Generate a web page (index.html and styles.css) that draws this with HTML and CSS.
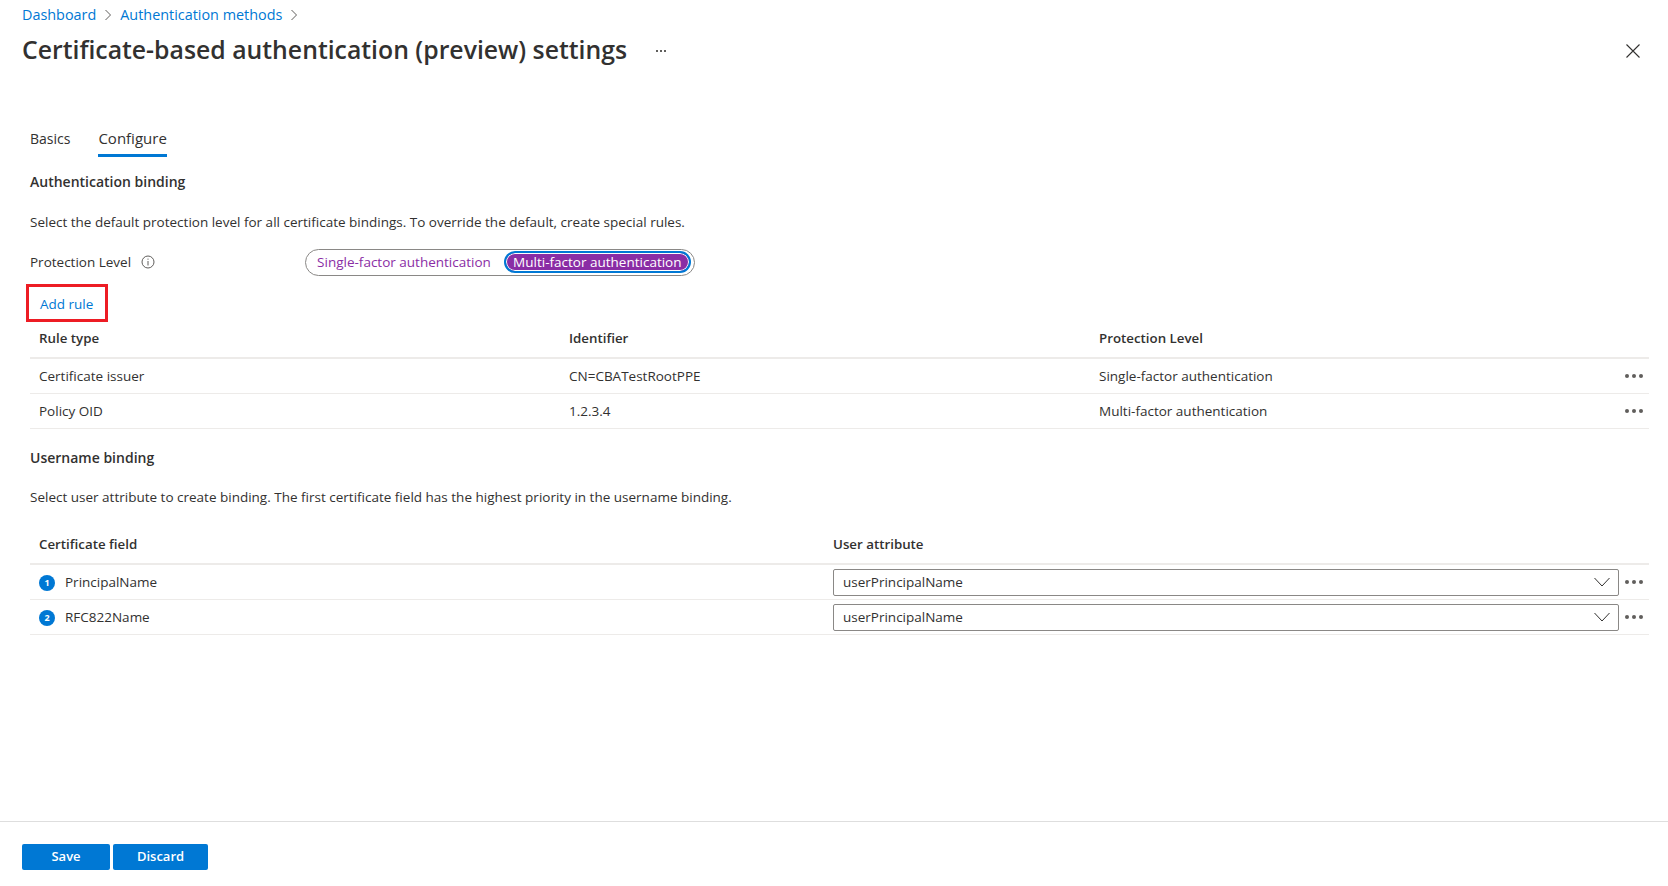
FILE: index.html
```html
<!DOCTYPE html>
<html lang="en">
<head>
  <meta charset="UTF-8">
  <meta name="viewport" content="width=device-width, initial-scale=1.0">
  <title>Certificate-based authentication (preview) settings</title>
  <link rel="stylesheet" href="styles.css">
</head>
<body>
  <div class="page">
    <header class="top">
      <nav class="crumbs">
        <a href="#">Dashboard</a>
        <svg class="crumb-sep" viewBox="0 0 8 12"><path d="M1.5 1l5 5-5 5"/></svg>
        <a href="#">Authentication methods</a>
        <svg class="crumb-sep" viewBox="0 0 8 12"><path d="M1.5 1l5 5-5 5"/></svg>
      </nav>
      <div class="title-row">
        <h1>Certificate-based authentication (preview) settings</h1>
        <span class="title-more">
          <i></i><i></i><i></i>
        </span>
        <svg class="close" viewBox="0 0 14 14"><path d="M.5.5l13 13M13.5.5l-13 13"/></svg>
      </div>
    </header>

    <main class="content">
      <div class="tabs">
        <a href="#" class="tab">Basics</a>
        <a href="#" class="tab active">Configure</a>
      </div>

      <h2 class="first">Authentication binding</h2>
      <p class="desc">Select the default protection level for all certificate bindings. To override the default, create special rules.</p>

      <div class="level-row">
        <span class="level-label">Protection Level</span>
        <svg class="info" viewBox="0 0 14 14">
          <circle cx="7" cy="7" r="6"/>
          <path d="M7 6v4.5M7 3.6v1.1"/>
        </svg>
        <div class="toggle">
          <span class="opt">Single-factor authentication</span>
          <span class="opt on">Multi-factor authentication</span>
        </div>
      </div>

      <div class="add-row">
        <a href="#" class="add-rule">Add rule</a>
      </div>

      <div class="grid rules head">
        <div>Rule type</div>
        <div>Identifier</div>
        <div>Protection Level</div>
        <div></div>
      </div>
      <div class="grid rules">
        <div>Certificate issuer</div>
        <div>CN=CBATestRootPPE</div>
        <div>Single-factor authentication</div>
        <div class="dots"><i></i><i></i><i></i></div>
      </div>
      <div class="grid rules">
        <div>Policy OID</div>
        <div>1.2.3.4</div>
        <div>Multi-factor authentication</div>
        <div class="dots"><i></i><i></i><i></i></div>
      </div>

      <h2 class="second">Username binding</h2>
      <p class="desc desc-user">Select user attribute to create binding. The first certificate field has the highest priority in the username binding.</p>

      <div class="grid fields head">
        <div>Certificate field</div>
        <div class="attr-head">User attribute</div>
        <div></div>
      </div>
      <div class="grid fields">
        <div class="field-name"><span class="badge">1</span>PrincipalName</div>
        <div class="select">
          <span>userPrincipalName</span>
          <svg viewBox="0 0 16 10"><path d="M.5 1l7.5 8 7.5-8"/></svg>
        </div>
        <div class="dots"><i></i><i></i><i></i></div>
      </div>
      <div class="grid fields">
        <div class="field-name"><span class="badge">2</span>RFC822Name</div>
        <div class="select">
          <span>userPrincipalName</span>
          <svg viewBox="0 0 16 10"><path d="M.5 1l7.5 8 7.5-8"/></svg>
        </div>
        <div class="dots"><i></i><i></i><i></i></div>
      </div>
    </main>

    <footer class="actions">
      <button type="button" class="save">Save</button>
      <button type="button" class="discard">Discard</button>
    </footer>
  </div>
</body>
</html>
```

FILE: styles.css
```css
* {
  box-sizing: border-box;
}
body {
  margin: 0;
  font-family: "Open Sans", "Noto Sans", sans-serif;
  font-size: 13.5px;
  color: #323130;
  background: #fff;
}
a {
  color: #0078d4;
  text-decoration: none;
}
.page {
  display: flex;
  flex-direction: column;
  height: 886px;
}

/* header */
.top {
  height: 122px;
  padding: 0 22px;
  flex: none;
}
.crumbs {
  height: 29px;
  display: flex;
  align-items: center;
  font-size: 14.4px;
}
.crumb-sep {
  width: 8px;
  height: 12px;
  margin: 0 8px 0 8px;
  fill: none;
  stroke: #605e5c;
  stroke-width: 1;
}
.title-row {
  display: flex;
  align-items: center;
  height: 41px;
}
h1 {
  margin: 0 0 2px;
  font-size: 24.8px;
  font-weight: 600;
  color: #323130;
}
.title-more {
  display: flex;
  gap: 2px;
  margin-left: 29px;
  padding-top: 2px;
}
.title-more i {
  width: 2px;
  height: 2px;
  background: #605e5c;
}
.close {
  width: 14px;
  height: 14px;
  margin-left: auto;
  margin-right: 6px;
  margin-top: 2px;
  fill: none;
  stroke: #323130;
  stroke-width: 1.1;
}

/* main */
.content {
  flex: 1;
  padding: 0 19px 0 30px;
}
.tabs {
  display: flex;
  gap: 28px;
  height: 35px;
}
.tab {
  color: #323130;
  font-size: 14px;
  height: 35px;
  padding-top: 7px;
}
.tab.active {
  font-size: 15px;
  padding-top: 6px;
  border-bottom: 3px solid #0078d4;
}
h2 {
  margin: 0;
  font-size: 14px;
  font-weight: 600;
  height: 18px;
  line-height: 18px;
  color: #323130;
}
h2.first {
  margin-top: 16px;
}
h2.second {
  margin-top: 20px;
}
.desc {
  margin: 22px 0 0;
  height: 18px;
  line-height: 18px;
}
.desc-user {
  margin-top: 21px;
}
.level-row {
  display: flex;
  align-items: center;
  height: 28px;
  margin-top: 17px;
}
.info {
  width: 14px;
  height: 14px;
  margin-left: 10px;
  fill: none;
  stroke: #605e5c;
  stroke-width: 1;
}
.toggle {
  display: flex;
  align-items: center;
  justify-content: space-between;
  width: 390px;
  height: 27px;
  margin-left: 150px;
  padding: 0 3px 0 11px;
  border: 1px solid #8a8886;
  border-radius: 14px;
}
.opt {
  color: #8a2da5;
}
.opt.on {
  width: 187px;
  height: 22px;
  padding: 0 7px;
  line-height: 18px;
  color: #fff;
  background: #8a2da5;
  border: 2px solid #0078d4;
  border-radius: 11px;
  box-shadow: 0 0 0 1px #fff inset;
  white-space: nowrap;
}
.add-row {
  height: 38px;
  margin-top: 8px;
  margin-left: -4px;
}
.add-rule {
  display: inline-block;
  width: 82px;
  height: 38px;
  line-height: 34px;
  padding-left: 11px;
  border: 3px solid #ed1c24;
}

/* tables */
.grid {
  display: grid;
  align-items: center;
  height: 35px;
  border-bottom: 1px solid #edebe9;
  padding-left: 9px;
}
.grid.head {
  height: 37px;
  padding-bottom: 3px;
  font-size: 13.3px;
  font-weight: 600;
  border-bottom-width: 2px;
}
.rules {
  grid-template-columns: 530px 530px 1fr 30px;
}
.fields {
  grid-template-columns: 794px 786px 1fr;
}
.grid.fields.head {
  height: 44px;
  margin-top: 15px;
  padding-top: 4px;
  padding-bottom: 0;
}
.dots {
  display: flex;
  gap: 3px;
  justify-content: flex-end;
  padding-right: 6px;
}
.dots i {
  width: 4px;
  height: 4px;
  border-radius: 50%;
  background: #605e5c;
}
.field-name {
  display: flex;
  align-items: center;
}
.badge {
  width: 16px;
  height: 16px;
  margin: 1px 10px 0 0;
  border-radius: 50%;
  background: #0078d4;
  color: #fff;
  font-size: 9px;
  font-weight: 700;
  line-height: 16px;
  text-align: center;
}
.select {
  display: flex;
  align-items: center;
  justify-content: space-between;
  height: 27px;
  padding: 0 8px 0 9px;
  border: 1px solid #8a8886;
  border-radius: 2px;
}
.select svg {
  width: 16px;
  height: 10px;
  fill: none;
  stroke: #323130;
  stroke-width: 1;
}

/* footer */
.actions {
  flex: none;
  height: 65px;
  border-top: 1px solid #dedede;
  padding: 22px 0 0 22px;
  display: flex;
  align-items: flex-start;
  gap: 3px;
}
.actions button {
  height: 26px;
  padding: 0 0 2px;
  border: none;
  border-radius: 2px;
  background: #0078d4;
  color: #fff;
  font-family: inherit;
  font-size: 13px;
  font-weight: 600;
}
.save {
  width: 88px;
}
.discard {
  width: 95px;
}
```
